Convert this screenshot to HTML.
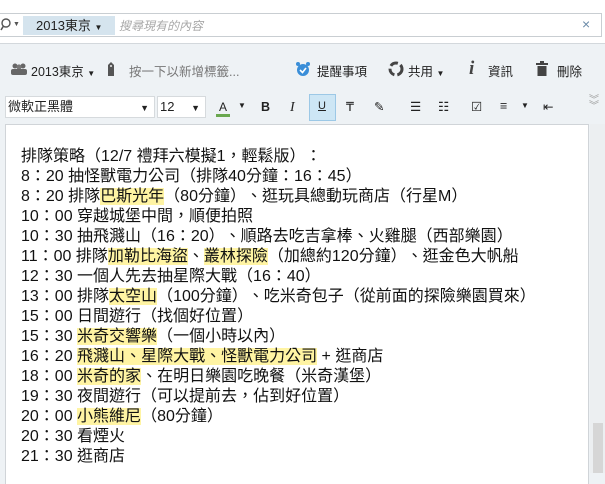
<!DOCTYPE html>
<html><head><meta charset="utf-8"><style>
*{margin:0;padding:0;box-sizing:border-box}
body{width:605px;height:473px;overflow:hidden;background:#eef2f5;font-family:"Liberation Sans","Noto Sans CJK TC",sans-serif;position:relative;color:#222}
.top{position:absolute;left:0;top:0;width:605px;height:44px;background:#fff;border-bottom:1px solid #d3d8dc}
.search{position:absolute;left:-2px;top:13px;width:604px;height:24px;border:1px solid #c9ced2;background:#fff}
.tag{position:absolute;left:24px;top:2px;width:92px;height:19px;background:#d5e4ee;font-size:13px;line-height:19px;padding-left:13px}
.ph{position:absolute;left:120px;top:3px;font-size:12px;color:#a8a8a8;font-style:italic}
.x{position:absolute;left:583px;top:2px;font-size:14px;color:#6a8aa8}
.t{position:absolute;font-size:12.5px;white-space:nowrap;color:#222}
.editor{position:absolute;left:5px;top:124px;width:584px;height:360px;background:#fff;border:1px solid #d0d4d8;border-bottom:none}
.txt{position:absolute;left:21px;top:147px;font-size:16px;line-height:20px;white-space:nowrap;color:#111}
.h{background:#fff4a3}
.p{display:inline-block;width:16px;text-align:center}
.sel{position:absolute;height:22px;background:#fff;border:1px solid #d6dadd;top:96px;font-size:13px;line-height:20px;padding-left:2px}
.sb{position:absolute;left:590px;top:124px;width:15px;height:349px;background:#eceff1}
.thumb{position:absolute;left:593px;top:423px;width:10px;height:50px;background:#d6d6d6}
</style></head><body>
<div class="top">
<div class="search">
<svg style="position:absolute;left:1px;top:4px" width="12" height="14"><circle cx="6" cy="5" r="4" fill="none" stroke="#555" stroke-width="1.4"/><path d="M3.5 8L1 12" stroke="#555" stroke-width="1.6"/></svg><span style="position:absolute;left:14px;top:7px;font-size:7px;color:#555">▼</span>
<div class="tag">2013東京 <span style="font-size:8px">▼</span></div>
<div class="ph">搜尋現有的內容</div>
<div class="x">×</div>
</div></div>
<svg style="position:absolute;left:10px;top:63px" width="18" height="12"><circle cx="5" cy="3" r="2.5" fill="#666"/><circle cx="13" cy="3" r="2.5" fill="#666"/><circle cx="9" cy="4" r="2.6" fill="#777"/><rect x="1" y="6" width="16" height="6" rx="2" fill="#666"/></svg>
<div class="t" style="left:31px;top:61px">2013東京 <span style="font-size:8px">▼</span></div>
<svg style="position:absolute;left:106px;top:61px" width="10" height="16"><path d="M2 4L5 1L8 4V15H2Z" fill="#555"/><circle cx="5" cy="5" r="1" fill="#eee"/></svg>
<div class="t" style="left:129px;top:61px;color:#777">按一下以新增標籤...</div>
<svg style="position:absolute;left:295px;top:61px" width="16" height="16"><circle cx="8" cy="9" r="6" fill="#3a8ed8"/><circle cx="3" cy="3" r="2" fill="#3a8ed8"/><circle cx="13" cy="3" r="2" fill="#3a8ed8"/><path d="M5 9L7.5 11.5L11 7" stroke="#fff" stroke-width="1.6" fill="none"/></svg>
<div class="t" style="left:317px;top:61px">提醒事項</div>
<svg style="position:absolute;left:388px;top:61px" width="16" height="16"><circle cx="8" cy="8" r="6" fill="none" stroke="#444" stroke-width="3" stroke-dasharray="8 3"/></svg>
<div class="t" style="left:408px;top:61px">共用 <span style="font-size:8px">▼</span></div>
<div class="t" style="left:469px;top:58px;font-family:'Liberation Serif',serif;font-style:italic;font-size:19px;font-weight:bold;color:#444">i</div>
<div class="t" style="left:488px;top:61px">資訊</div>
<svg style="position:absolute;left:536px;top:61px" width="12" height="15"><rect x="0" y="2" width="12" height="2" fill="#444"/><rect x="4" y="0" width="4" height="2" fill="#444"/><rect x="1.5" y="5" width="9" height="10" fill="#444"/></svg>
<div class="t" style="left:557px;top:61px">刪除</div>
<div class="sel" style="left:5px;width:150px">微軟正黑體<span style="position:absolute;right:5px;top:1px;font-size:9px">▼</span></div>
<div class="sel" style="left:157px;width:49px">12<span style="position:absolute;right:5px;top:1px;font-size:9px">▼</span></div>
<div class="t" style="left:219px;top:100px;font-size:12px">A</div><div style="position:absolute;left:216px;top:114px;width:14px;height:3px;background:#6aa84f"></div>
<div class="t" style="left:238px;top:101px;font-size:8px">▼</div>
<div class="t" style="left:261px;top:100px;font-weight:bold">B</div>
<div class="t" style="left:290px;top:100px;font-style:italic;font-family:'Liberation Serif',serif;font-size:14px">I</div>
<div style="position:absolute;left:309px;top:94px;width:27px;height:27px;background:#cde6f5;border:1px solid #9cc8e6"></div>
<div class="t" style="left:318px;top:100px;text-decoration:underline;font-size:11px">U</div>
<div class="t" style="left:346px;top:99px">₸</div>
<div class="t" style="left:374px;top:99px">✎</div>
<div class="t" style="left:410px;top:99px">☰</div>
<div class="t" style="left:438px;top:99px">☷</div>
<div class="t" style="left:471px;top:99px">☑</div>
<div class="t" style="left:500px;top:99px">≡</div><div class="t" style="left:521px;top:101px;font-size:8px">▼</div>
<div class="t" style="left:543px;top:99px">⇤</div>
<div class="t" style="left:589px;top:98px;color:#999;font-size:10px;line-height:6px">︾<br>︾</div>
<div class="editor"></div>
<div class="sb"></div><div class="thumb"></div>
<div class="txt">
排隊策略<span class="p">（</span>12/7 禮拜六模擬1<span class="p">，</span>輕鬆版<span class="p">）</span><span class="p">：</span><br>
8<span class="p">：</span>20 抽怪獸電力公司<span class="p">（</span>排隊40分鐘<span class="p">：</span>16<span class="p">：</span>45<span class="p">）</span><br>
8<span class="p">：</span>20 排隊<span class="h">巴斯光年</span><span class="p">（</span>80分鐘<span class="p">）</span><span class="p">、</span>逛玩具總動玩商店<span class="p">（</span>行星M<span class="p">）</span><br>
10<span class="p">：</span>00 穿越城堡中間<span class="p">，</span>順便拍照<br>
10<span class="p">：</span>30 抽飛濺山<span class="p">（</span>16<span class="p">：</span>20<span class="p">）</span><span class="p">、</span>順路去吃吉拿棒<span class="p">、</span>火雞腿<span class="p">（</span>西部樂園<span class="p">）</span><br>
11<span class="p">：</span>00 排隊<span class="h">加勒比海盜</span><span class="p">、</span><span class="h">叢林探險</span><span class="p">（</span>加總約120分鐘<span class="p">）</span><span class="p">、</span>逛金色大帆船<br>
12<span class="p">：</span>30 一個人先去抽星際大戰<span class="p">（</span>16<span class="p">：</span>40<span class="p">）</span><br>
13<span class="p">：</span>00 排隊<span class="h">太空山</span><span class="p">（</span>100分鐘<span class="p">）</span><span class="p">、</span>吃米奇包子<span class="p">（</span>從前面的探險樂園買來<span class="p">）</span><br>
15<span class="p">：</span>00 日間遊行<span class="p">（</span>找個好位置<span class="p">）</span><br>
15<span class="p">：</span>30 <span class="h">米奇交響樂</span><span class="p">（</span>一個小時以內<span class="p">）</span><br>
16<span class="p">：</span>20 <span class="h">飛濺山<span class="p">、</span>星際大戰<span class="p">、</span>怪獸電力公司</span> + 逛商店<br>
18<span class="p">：</span>00 <span class="h">米奇的家</span><span class="p">、</span>在明日樂園吃晚餐<span class="p">（</span>米奇漢堡<span class="p">）</span><br>
19<span class="p">：</span>30 夜間遊行<span class="p">（</span>可以提前去<span class="p">，</span>佔到好位置<span class="p">）</span><br>
20<span class="p">：</span>00 <span class="h">小熊維尼</span><span class="p">（</span>80分鐘<span class="p">）</span><br>
20<span class="p">：</span>30 看煙火<br>
21<span class="p">：</span>30 逛商店
</div>
</body></html>
